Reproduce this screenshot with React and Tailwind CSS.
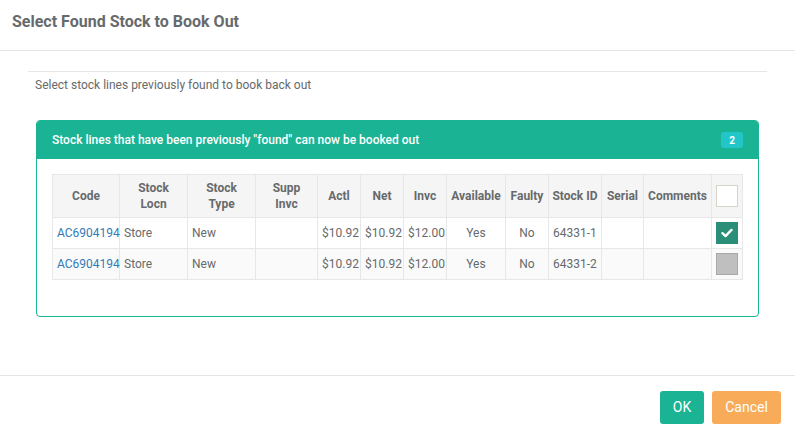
const COLUMNS = [
  { key: 'code', label: ['Code'], width: 67 },
  { key: 'locn', label: ['Stock', 'Locn'], width: 68 },
  { key: 'type', label: ['Stock', 'Type'], width: 68 },
  { key: 'supp', label: ['Supp', 'Invc'], width: 62 },
  { key: 'actl', label: ['Actl'], width: 43 },
  { key: 'net', label: ['Net'], width: 43 },
  { key: 'invc', label: ['Invc'], width: 43 },
  { key: 'avail', label: ['Available'], width: 59 },
  { key: 'faulty', label: ['Faulty'], width: 43 },
  { key: 'id', label: ['Stock ID'], width: 53 },
  { key: 'serial', label: ['Serial'], width: 42 },
  { key: 'comments', label: ['Comments'], width: 68 },
]

const ROWS = [
  { code: 'AC6904194', locn: 'Store', type: 'New', actl: '$10.92', net: '$10.92', invc: '$12.00', avail: 'Yes', faulty: 'No', id: '64331-1', checked: true },
  { code: 'AC6904194', locn: 'Store', type: 'New', actl: '$10.92', net: '$10.92', invc: '$12.00', avail: 'Yes', faulty: 'No', id: '64331-2', checked: false },
]

function Check({ checked, header }) {
  if (header) {
    return <div className="w-[22px] h-[22px] mx-auto bg-white border border-[#d6d2cc]" />
  }
  if (checked) {
    return (
      <div className="w-[22px] h-[22px] mx-auto bg-[#2b8e78] flex items-center justify-center">
        <svg width="12" height="10" viewBox="0 0 12 10" fill="none">
          <path d="M1.5 5.2l3 2.9 6-6.2" stroke="#fff" strokeWidth="2.4" strokeLinecap="round" strokeLinejoin="round" />
        </svg>
      </div>
    )
  }
  return <div className="w-[22px] h-[22px] mx-auto bg-[#bfbfbf] border border-[#a9a9a9]" />
}

export default function App() {
  return (
    <div className="w-[795px] h-[440px] bg-white flex flex-col text-[12px] text-[#676a6c]" style={{ fontFamily: 'Roboto, "Liberation Sans", sans-serif' }}>
      {/* header */}
      <div className="h-[51px] flex items-center px-3 border-b border-[#e5e5e5] shrink-0">
        <h1 className="text-[16px] font-bold text-[#676a6c] pb-[6px]">Select Found Stock to Book Out</h1>
      </div>

      {/* body */}
      <div className="flex-1 pt-[20px]">
        <div className="mx-[28px] border-t border-[#e7e7e7] pt-[5px]">
          <div className="pl-[7px] leading-[16px]">Select stock lines previously found to book back out</div>

          <div className="mx-[8px] mt-[27px] border border-[#1ab394] rounded-[4px] overflow-hidden">
            <div className="h-[38px] bg-[#1ab394] flex items-center justify-between pl-[15px] pr-[15px]">
              <span className="text-white text-[12px] font-medium">Stock lines that have been previously "found" can now be booked out</span>
              <span className="w-[22px] h-[16px] rounded-[3px] bg-[#23c6c8] text-white text-[10px] font-bold flex items-center justify-center">2</span>
            </div>
            <div className="px-[15px] pt-[15px] pb-[36px]">
              <table className="w-full table-fixed border-collapse">
                <colgroup>
                  {COLUMNS.map(c => <col key={c.key} style={{ width: c.width }} />)}
                  <col style={{ width: 31 }} />
                </colgroup>
                <thead>
                  <tr className="bg-[#f5f5f5]">
                    {COLUMNS.map(c => (
                      <th key={c.key} className="h-[43px] border border-[#e7e7e7] px-[2px] text-center font-bold leading-[16px] whitespace-nowrap text-[#676a6c]">
                        {c.label.map((l, i) => <div key={i}>{l}</div>)}
                      </th>
                    ))}
                    <th className="border border-[#e7e7e7]"><Check header /></th>
                  </tr>
                </thead>
                <tbody>
                  {ROWS.map((r, i) => (
                    <tr key={r.id} className={i % 2 === 1 ? 'bg-[#fafafa]' : 'bg-white'}>
                      <td className="h-[31px] border border-[#e7e7e7] px-[4px] text-[#337ab7]">{r.code}</td>
                      <td className="border border-[#e7e7e7] px-[4px]">{r.locn}</td>
                      <td className="border border-[#e7e7e7] px-[4px]">{r.type}</td>
                      <td className="border border-[#e7e7e7] px-[4px]"></td>
                      <td className="border border-[#e7e7e7] px-[4px]">{r.actl}</td>
                      <td className="border border-[#e7e7e7] px-[4px]">{r.net}</td>
                      <td className="border border-[#e7e7e7] px-[4px]">{r.invc}</td>
                      <td className="border border-[#e7e7e7] px-[4px] text-center">{r.avail}</td>
                      <td className="border border-[#e7e7e7] px-[4px] text-center">{r.faulty}</td>
                      <td className="border border-[#e7e7e7] px-[4px]">{r.id}</td>
                      <td className="border border-[#e7e7e7] px-[4px]"></td>
                      <td className="border border-[#e7e7e7] px-[4px]"></td>
                      <td className="border border-[#e7e7e7]"><Check checked={r.checked} /></td>
                    </tr>
                  ))}
                </tbody>
              </table>
            </div>
          </div>
        </div>
      </div>

      {/* footer */}
      <div className="h-[65px] border-t border-[#e5e5e5] flex items-start justify-end gap-[8px] pt-[15px] pr-[14px] shrink-0">
        <button className="h-[33px] w-[44px] rounded-[3px] bg-[#1ab394] text-white text-[14px]">OK</button>
        <button className="h-[33px] w-[69px] rounded-[3px] bg-[#f8ac59] text-white text-[14px]">Cancel</button>
      </div>
    </div>
  )
}
